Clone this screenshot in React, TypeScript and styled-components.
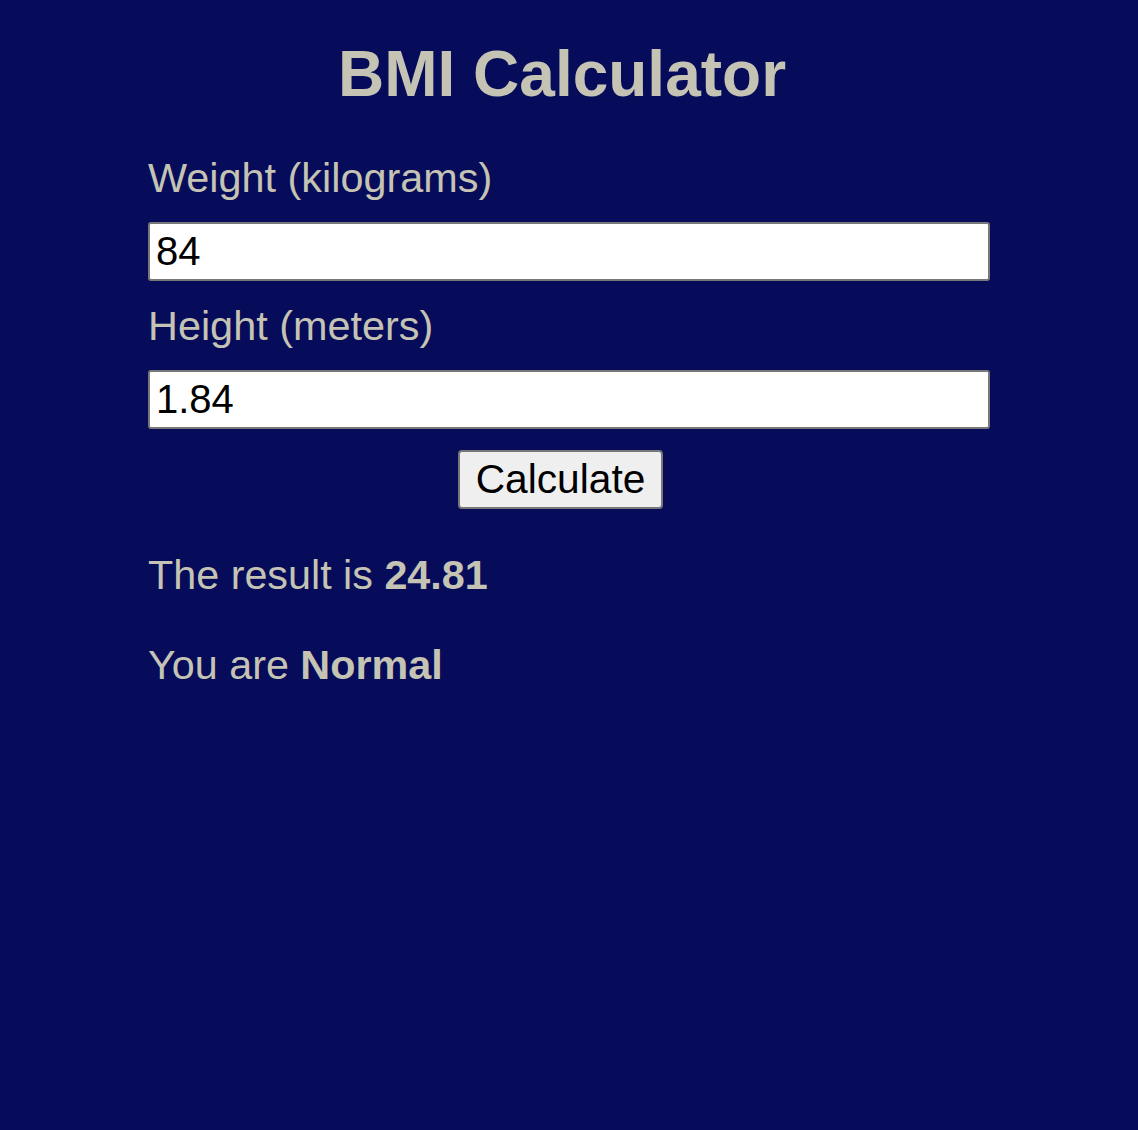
import React from "react";
import styled, { createGlobalStyle } from "styled-components";

const GlobalStyle = createGlobalStyle`
  html, body {
    margin: 0;
    padding: 0;
    background: #060c5a;
  }
  body {
    font-family: "Liberation Sans", Helvetica, Arial, sans-serif;
    color: #c5c3b4;
  }
`;

const Page = styled.main`
  min-height: 1130px;
  box-sizing: border-box;
  padding-top: 38px;
  background: #060c5a;
`;

const Title = styled.h1`
  margin: 0 0 44px 0;
  padding-right: 14px;
  text-align: center;
  font-size: 64px;
  line-height: 72px;
  font-weight: 700;
  color: #c5c3b4;
`;

const Form = styled.form`
  width: 842px;
  margin-left: 148px;
  display: flex;
  flex-direction: column;
`;

const Label = styled.label<{ $first?: boolean }>`
  display: block;
  margin: ${(p) => (p.$first ? "0" : "21px")} 0 20px 0;
  font-size: 41.4px;
  line-height: 48px;
  color: #c5c3b4;
`;

const Input = styled.input`
  box-sizing: border-box;
  width: 100%;
  height: 59px;
  margin: 0;
  padding: 0 6px;
  border: 2px solid #787878;
  border-radius: 3px;
  background: #ffffff;
  color: #000000;
  font-family: "Liberation Sans", Helvetica, Arial, sans-serif;
  font-size: 40px;
  outline: none;
`;

const ButtonRow = styled.div`
  display: flex;
  justify-content: center;
  padding-right: 17px;
  margin-top: 21px;
`;

const Button = styled.button`
  box-sizing: border-box;
  width: 205px;
  height: 59px;
  padding: 0;
  border: 2px solid #787878;
  border-radius: 4px;
  background: #efefef;
  color: #000000;
  font-family: "Liberation Sans", Helvetica, Arial, sans-serif;
  font-size: 40.7px;
  cursor: pointer;
`;

const Result = styled.p<{ $gap: number }>`
  margin: ${(p) => p.$gap}px 0 0 0;
  font-size: 41.3px;
  line-height: 48px;
  color: #c5c3b4;

  strong {
    font-weight: 700;
  }
`;

export default function App() {
  const [weight, setWeight] = React.useState("84");
  const [height, setHeight] = React.useState("1.84");

  return (
    <>
      <GlobalStyle />
      <Page>
        <Title>BMI Calculator</Title>
        <Form onSubmit={(e) => e.preventDefault()}>
          <Label $first htmlFor="weight">Weight (kilograms)</Label>
          <Input
            id="weight"
            type="text"
            value={weight}
            onChange={(e) => setWeight(e.target.value)}
          />
          <Label htmlFor="height">Height (meters)</Label>
          <Input
            id="height"
            type="text"
            value={height}
            onChange={(e) => setHeight(e.target.value)}
          />
          <ButtonRow>
            <Button type="submit">Calculate</Button>
          </ButtonRow>
          <Result $gap={42}>
            The result is <strong>24.81</strong>
          </Result>
          <Result $gap={42}>
            You are <strong>Normal</strong>
          </Result>
        </Form>
      </Page>
    </>
  );
}
